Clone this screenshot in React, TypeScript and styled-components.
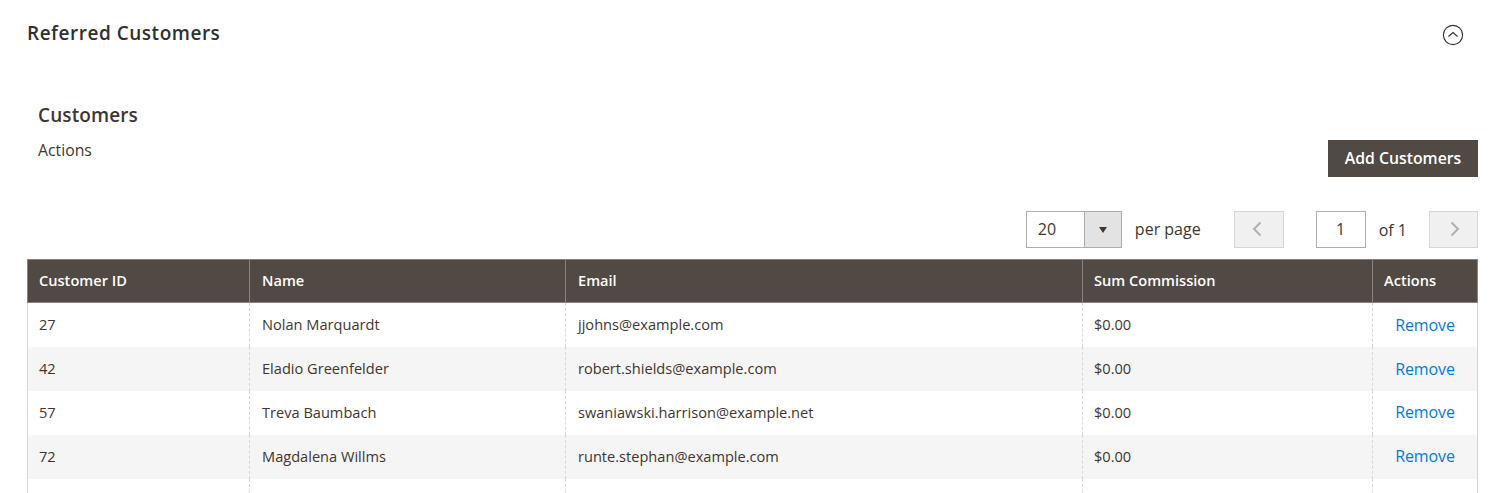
import React from 'react';
import styled, { createGlobalStyle } from 'styled-components';

const Global = createGlobalStyle`
  html, body { margin: 0; padding: 0; background: #fff; }
  body { font-family: "Open Sans", sans-serif; color: #41362f; height: 493px; overflow: hidden; }
`;

const Page = styled.div`
  width: 1507px;
  height: 493px;
  overflow: hidden;
  box-sizing: border-box;
  padding: 0 29px 0 27px;
`;

const SectionHeader = styled.div`
  display: flex;
  justify-content: space-between;
  height: 96px;
`;

const SectionTitle = styled.h2`
  margin: 20px 0 0;
  font-size: 19px;
  line-height: 27px;
  font-weight: 600;
  letter-spacing: 0.52px;
  color: #303030;
`;

const Toggle = styled.button`
  margin: 24px 14px 0 0;
  padding: 0;
  width: 22px;
  height: 22px;
  border: 0;
  background: none;
  display: block;
`;

const TopRow = styled.div`
  display: flex;
  justify-content: space-between;
  height: 115px;
  padding-left: 11px;
`;

const Heading = styled.h3`
  margin: 6px 0 0;
  font-size: 19px;
  line-height: 27px;
  font-weight: 600;
  letter-spacing: 0.1px;
  color: #41362f;
`;

const ActionsLabel = styled.div`
  margin-top: 11px;
  font-size: 15.8px;
  line-height: 20px;
  color: #41362f;
`;

const AddButton = styled.button`
  margin-top: 44px;
  width: 150px;
  height: 37px;
  padding: 0 0 2px;
  border: 0;
  background: #514943;
  color: #fff;
  font-family: inherit;
  font-size: 15.8px;
  font-weight: 600;
  align-self: flex-start;
`;

const Pager = styled.div`
  display: flex;
  justify-content: flex-end;
  align-items: center;
  height: 37px;
  margin-bottom: 11px;
  font-size: 16px;
`;

const PageSize = styled.div`
  display: flex;
  width: 96px;
  height: 37px;
  box-sizing: border-box;
  border: 1px solid #adadad;
`;

const SizeValue = styled.div`
  flex: 1;
  padding-left: 11px;
  line-height: 35px;
  color: #41362f;
`;

const SizeArrow = styled.div`
  width: 36px;
  border-left: 1px solid #adadad;
  background: #e3e3e3;
  display: flex;
  align-items: center;
  justify-content: center;
  &::after {
    content: '';
    border-top: 6px solid #41362f;
    border-left: 4.5px solid transparent;
    border-right: 4.5px solid transparent;
  }
`;

const PerPage = styled.span`
  margin: 0 33px 0 13px;
  color: #41362f;
  line-height: 37px;
`;

const PageNav = styled.button<{ $w: number; $dir: 'prev' | 'next' }>`
  width: ${p => p.$w}px;
  height: 37px;
  box-sizing: border-box;
  padding: 0 ${p => (p.$dir === 'prev' ? 3 : 0)}px 2px ${p => (p.$dir === 'next' ? 3 : 0)}px;
  border: 1px solid #d6d6d6;
  background: #f0f0f0;
  display: flex;
  align-items: center;
  justify-content: center;
`;

const PageInput = styled.div`
  width: 50px;
  height: 37px;
  box-sizing: border-box;
  margin-left: 32px;
  border: 1px solid #adadad;
  line-height: 35px;
  text-align: center;
`;

const OfTotal = styled.span`
  margin: 0 22px 0 13px;
`;

const Table = styled.table`
  width: 1451px;
  table-layout: fixed;
  border-collapse: separate;
  border-spacing: 0;
  font-size: 14.6px;
`;

const HeadCell = styled.th`
  height: 44px;
  box-sizing: border-box;
  padding: 0 11px 2px;
  background: #514943;
  color: #fff;
  font-size: 14.6px;
  font-weight: 600;
  text-align: left;
  border-top: 1px solid #8a837f;
  border-bottom: 1px solid #8a837f;
  border-left: 1px solid #8a837f;
  &:nth-child(2), &:nth-child(3) { padding-left: 12px; }
  &:last-child { border-right: 1px solid #8a837f; }
`;

const Row = styled.tr<{ $alt: boolean }>`
  background: ${p => (p.$alt ? '#f5f5f5' : '#fff')};
`;

const Cell = styled.td`
  height: 44px;
  box-sizing: border-box;
  padding: 0 11px 2px;
  color: #41362f;
  font-size: 14.6px;
  border-left: 1px dashed #d6d6d6;
  &:first-child { border-left: 1px solid #d6d6d6; }
  &:nth-child(2), &:nth-child(3) { padding-left: 12px; }
  &:last-child { border-right: 1px solid #d6d6d6; }
`;

const ActionCell = styled(Cell)`
  padding: 0;
  text-align: center;
  tr:nth-child(n + 3) > & { padding-bottom: 2px; }
`;

const RemoveLink = styled.a`
  color: #007bdb;
  font-size: 16px;
  letter-spacing: -0.1px;
  text-decoration: none;
  cursor: pointer;
`;

const widths = [222, 316, 517, 290, 106];
const headers = ['Customer ID', 'Name', 'Email', 'Sum Commission', 'Actions'];
const rows = [
  ['27', 'Nolan Marquardt', 'jjohns@example.com'],
  ['42', 'Eladio Greenfelder', 'robert.shields@example.com'],
  ['57', 'Treva Baumbach', 'swaniawski.harrison@example.net'],
  ['72', 'Magdalena Willms', 'runte.stephan@example.com'],
];

export default function App() {
  return (
    <Page>
      <Global />
      <SectionHeader>
        <SectionTitle>Referred Customers</SectionTitle>
        <Toggle aria-label="Collapse">
          <svg width="22" height="22" viewBox="0 0 22 22" fill="none">
            <circle cx="11" cy="11" r="9.6" stroke="#303030" strokeWidth="1.1" />
            <path d="M6.5 12.5 L11 8.5 L15.5 12.5" stroke="#303030" strokeWidth="1.1" />
          </svg>
        </Toggle>
      </SectionHeader>
      <TopRow>
        <div>
          <Heading>Customers</Heading>
          <ActionsLabel>Actions</ActionsLabel>
        </div>
        <AddButton>Add Customers</AddButton>
      </TopRow>
      <Pager>
        <PageSize>
          <SizeValue>20</SizeValue>
          <SizeArrow />
        </PageSize>
        <PerPage>per page</PerPage>
        <PageNav $w={50} $dir="prev" aria-label="Previous">
          <svg width="12" height="18" viewBox="0 0 12 18" fill="none">
            <path d="M9.5 2.5 L3 9 L9.5 15.5" stroke="#b0b0b0" strokeWidth="2" />
          </svg>
        </PageNav>
        <PageInput>1</PageInput>
        <OfTotal>of 1</OfTotal>
        <PageNav $w={49} $dir="next" aria-label="Next">
          <svg width="12" height="18" viewBox="0 0 12 18" fill="none">
            <path d="M2.5 2.5 L9 9 L2.5 15.5" stroke="#b0b0b0" strokeWidth="2" />
          </svg>
        </PageNav>
      </Pager>
      <Table>
        <colgroup>
          {widths.map((w, i) => <col key={i} width={w} />)}
        </colgroup>
        <thead>
          <tr>{headers.map(h => <HeadCell key={h}>{h}</HeadCell>)}</tr>
        </thead>
        <tbody>
          {rows.map((r, i) => (
            <Row key={r[0]} $alt={i % 2 === 1}>
              {r.map(c => <Cell key={c}>{c}</Cell>)}
              <Cell>$0.00</Cell>
              <ActionCell><RemoveLink>Remove</RemoveLink></ActionCell>
            </Row>
          ))}
          <Row $alt={false}>
            <Cell /><Cell /><Cell /><Cell /><ActionCell />
          </Row>
        </tbody>
      </Table>
    </Page>
  );
}
